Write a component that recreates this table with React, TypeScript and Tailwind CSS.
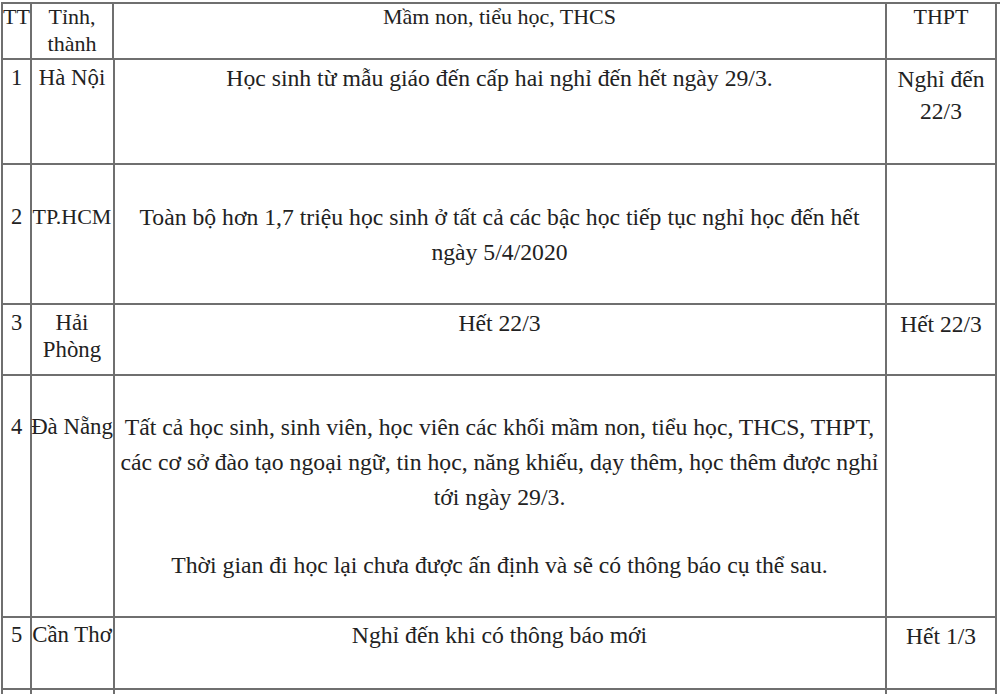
import { Fragment } from "react"

const rows = [
  {
    tt: "1",
    city: "Hà Nội",
    cityCls: "whitespace-nowrap",
    body: [["Học sinh từ mẫu giáo đến cấp hai nghỉ đến hết ngày 29/3."]],
    thpt: "Nghỉ đến 22/3",
    side: "pt-[5px]",
    mid: "pt-px",
    right: "pt-[3px]",
  },
  {
    tt: "2",
    city: "TP.HCM",
    cityCls: "whitespace-nowrap text-[22px]",
    body: [["Toàn bộ hơn 1,7 triệu học sinh ở tất cả các bậc học tiếp tục nghỉ học đến hết", "ngày 5/4/2020"]],
    thpt: "",
    side: "pt-[39px]",
    mid: "pt-[35px]",
    right: "pt-[3px]",
  },
  {
    tt: "3",
    city: "Hải Phòng",
    cityCls: "",
    body: [["Hết 22/3"]],
    thpt: "Hết 22/3",
    side: "pt-[5px]",
    mid: "pt-px",
    right: "pt-[3px]",
  },
  {
    tt: "4",
    city: "Đà Nẵng",
    cityCls: "whitespace-nowrap",
    body: [
      [
        "Tất cả học sinh, sinh viên, học viên các khối mầm non, tiểu học, THCS, THPT,",
        "các cơ sở đào tạo ngoại ngữ, tin học, năng khiếu, dạy thêm, học thêm được nghỉ",
        "tới ngày 29/3.",
      ],
      ["Thời gian đi học lại chưa được ấn định và sẽ có thông báo cụ thể sau."],
    ],
    thpt: "",
    side: "pt-[38px]",
    mid: "pt-[34px]",
    right: "pt-[3px]",
  },
  {
    tt: "5",
    city: "Cần Thơ",
    cityCls: "whitespace-nowrap",
    body: [["Nghỉ đến khi có thông báo mới"]],
    thpt: "Hết 1/3",
    side: "pt-[4px]",
    mid: "pt-0",
    right: "pt-[2px]",
  },
  {
    tt: "6",
    city: "Huế",
    cityCls: "whitespace-nowrap",
    body: [["Học sinh nghỉ hết tháng 3."]],
    thpt: "",
    side: "pt-[6px]",
    mid: "pt-[2px]",
    right: "pt-[4px]",
  },
]

const cell = "border-r-2 border-b-2 border-[#6f6f6f] text-center"

export default function App() {
  return (
    <div className="h-[694px] overflow-hidden bg-white text-[22px] text-[#222] font-['Liberation_Serif',serif]">
      <div className="ml-px mt-[2px] grid grid-cols-[29px_82px_773px_110px] grid-rows-[56px_105px_140px_71px_242px_72px_100px] border-l-2 border-t-2 border-[#6f6f6f]">
        <div className={`${cell} leading-[26.7px] whitespace-nowrap`}>TT</div>
        <div className={`${cell} leading-[26.7px]`}>Tỉnh, thành</div>
        <div className={`${cell} leading-[26.7px]`}>Mầm non, tiểu học, THCS</div>
        <div className={`${cell} leading-[26.7px]`}>THPT</div>

        {rows.map((r) => (
          <Fragment key={r.tt}>
            <div className={`${cell} ${r.side} text-[22.5px] leading-[26.7px]`}>{r.tt}</div>
            <div className={`${cell} ${r.side} text-[22.8px] leading-[26.7px] -mx-px`}>
              <span className={r.cityCls}>{r.city}</span>
            </div>
            <div className={`${cell} ${r.mid} px-[2px] text-[23.7px] leading-[35px]`}>
              {r.body.map((p, i) => (
                <p key={i} className={i > 0 ? "mt-[33px]" : ""}>
                  {p.map((line, j) => (
                    <Fragment key={j}>
                      {j > 0 && <br />}
                      <span className="whitespace-nowrap">{line}</span>
                    </Fragment>
                  ))}
                </p>
              ))}
            </div>
            <div className={`${cell} ${r.right} px-1 text-[23.5px] leading-[32px]`}>{r.thpt}</div>
          </Fragment>
        ))}
      </div>
    </div>
  )
}
